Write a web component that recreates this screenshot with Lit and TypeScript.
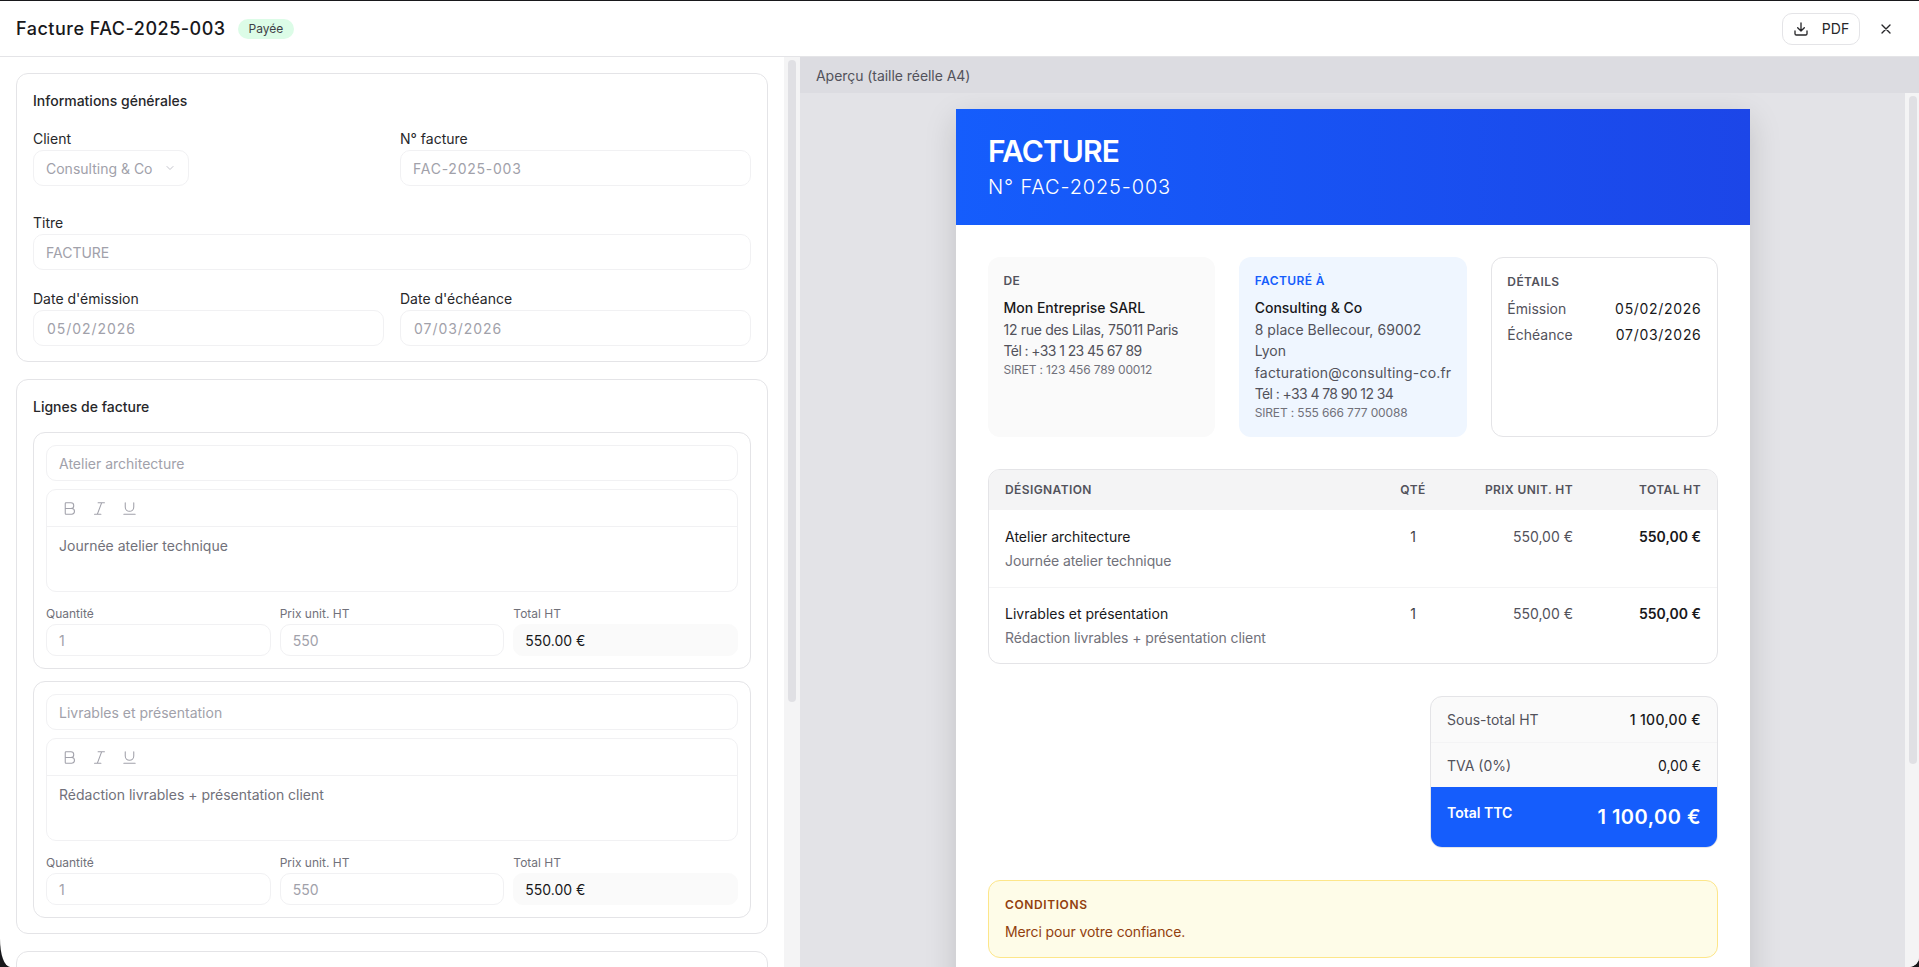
import { LitElement, html, css, svg } from 'lit';
import { customElement } from 'lit/decorators.js';

const LINES = [
  { title: 'Atelier architecture', desc: 'Journée atelier technique' },
  { title: 'Livrables et présentation', desc: 'Rédaction livrables + présentation client' },
];

const bold = svg`<path d="M6 12h9a4 4 0 0 1 0 8H7a1 1 0 0 1-1-1V5a1 1 0 0 1 1-1h7a4 4 0 0 1 0 8"/>`;
const italic = svg`<path d="M19 4h-9M14 20H5M15 4 9 20"/>`;
const underline = svg`<path d="M6 4v6a6 6 0 0 0 12 0V4M4 20h16"/>`;

@customElement('app-root')
export class AppRoot extends LitElement {
  static styles = css`
    :host {
      display: block;
      height: 967px;
      overflow: hidden;
      background: #18181b;
      font-family: Inter, 'Noto Sans', sans-serif;
      color: #18181b;
    }
    .modal {
      height: 966px;
      margin-top: 1px;
      background: #fff;
      border-radius: 0 0 10px 10px / 0 0 10px 28px;
      overflow: hidden;
      display: flex;
      flex-direction: column;
    }
    .top {
      height: 56px;
      box-sizing: border-box;
      flex: none;
      border-bottom: 1px solid #e4e4e7;
      display: flex;
      align-items: center;
      padding: 0 16px;
      gap: 12px;
    }
    .top h1 {
      margin: 0;
      font-size: 18px;
      font-weight: 500;
      line-height: 28px;
      letter-spacing: 0.5px;
    }
    .badge {
      background: #dcfce7;
      color: #3f3f46;
      font-size: 12px;
      height: 20px;
      line-height: 20px;
      padding: 0 11px;
      border-radius: 10px;
    }
    .spacer { flex: 1; }
    .pdf {
      width: 78px;
      height: 32px;
      box-sizing: border-box;
      border: 1px solid #e4e4e7;
      border-radius: 10px;
      display: flex;
      align-items: center;
      justify-content: center;
      gap: 13px;
      font-size: 14px;
      color: #27272a;
    }
    .close { margin: 0 9px 0 6px; display: flex; }
    .split { flex: 1; min-height: 0; display: flex; }
    .left {
      width: 800px;
      flex: none;
      position: relative;
      overflow: hidden;
      padding: 16px 32px 0 16px;
      box-sizing: border-box;
      display: flex;
      flex-direction: column;
      gap: 17px;
    }
    .track {
      position: absolute;
      top: 0;
      right: 0;
      bottom: 0;
      background: #f4f4f5;
    }
    .left .track { width: 16px; }
    .pv-body .track { width: 14px; }
    .thumb {
      position: absolute;
      left: 4px;
      top: 3px;
      width: 8px;
      border-radius: 4px;
      background: #e0e0e4;
    }
    .left .thumb { height: 642px; }
    .pv-body .thumb { height: 668px; }
    .card {
      flex: none;
      border: 1px solid #e4e4e7;
      border-radius: 12px;
      padding: 15px 16px;
    }
    .card.empty { height: 120px; }
    .card h2 {
      margin: 0;
      font-size: 14px;
      font-weight: 500;
      line-height: 24px;
      color: #27272a;
    }
    .fields {
      display: grid;
      grid-template-columns: 1fr 1fr;
      column-gap: 16px;
      margin-top: 16px;
    }
    .field { display: flex; flex-direction: column; align-items: flex-start; margin-bottom: 27px; }
    .field.wide { grid-column: 1 / 3; margin-bottom: 19px; }
    .field.last { margin-bottom: 0; }
    label {
      font-size: 14px;
      line-height: 20px;
      margin-bottom: 1px;
      color: #27272a;
    }
    .input {
      box-sizing: border-box;
      width: 100%;
      height: 36px;
      border: 1px solid #f1f1f3;
      border-radius: 10px;
      padding: 0 12px;
      display: flex;
      align-items: center;
      font-size: 14px;
      color: #a1a1aa;
    }
    .input.code { letter-spacing: 0.75px; }
    .input.date { padding: 0 13px; letter-spacing: 0.95px; }
    .select {
      width: 156px;
      justify-content: space-between;
    }
    .lines { display: flex; flex-direction: column; gap: 12px; margin-top: 13px; }
    .line {
      border: 1px solid #e4e4e7;
      border-radius: 12px;
      padding: 12px;
      display: flex;
      flex-direction: column;
      gap: 8px;
    }
    .editor {
      border: 1px solid #f1f1f3;
      border-radius: 10px;
      height: 103px;
      box-sizing: border-box;
    }
    .toolbar {
      height: 37px;
      box-sizing: border-box;
      border-bottom: 1px solid #f1f1f3;
      display: flex;
      align-items: center;
      gap: 13px;
      padding: 0 14px;
      color: #a1a1aa;
    }
    .toolbar svg { display: block; }
    .body {
      padding: 9px 12px;
      font-size: 14px;
      line-height: 20px;
      color: #71717a;
    }
    .nums {
      display: grid;
      grid-template-columns: 1fr 1fr 1fr;
      gap: 9px;
      margin-top: 6px;
    }
    .nums label {
      display: block;
      font-size: 12px;
      line-height: 16px;
      color: #71717a;
      margin-bottom: 2px;
    }
    .nums .input { height: 32px; }
    .input.total {
      background: #fafafa;
      border-color: #fafafa;
      color: #18181b;
      padding: 0 11px;
    }
    .right {
      flex: 1;
      min-width: 0;
      background: #e3e3e7;
      display: flex;
      flex-direction: column;
    }
    .pv-head {
      height: 36px;
      flex: none;
      background: #dcdce1;
      padding: 0 16px;
      display: flex;
      align-items: center;
      font-size: 14px;
      letter-spacing: -0.05px;
      color: #52525b;
    }
    .pv-body {
      flex: 1;
      min-height: 0;
      position: relative;
      overflow: hidden;
      padding: 16px 155px 0 156px;
    }
    .page {
      width: 794px;
      background: #fff;
      box-shadow: 0 10px 30px rgba(0, 0, 0, 0.15);
    }
    .banner {
      height: 116px;
      box-sizing: border-box;
      padding: 24px 32px;
      color: #fff;
      background: linear-gradient(90deg, #155dfc, #1c46e8);
    }
    .banner h3 {
      margin: 0;
      font-size: 30px;
      line-height: 36px;
      font-weight: 600;
      letter-spacing: -0.9px;
    }
    .banner p {
      margin: 4px 0 0;
      font-size: 20px;
      line-height: 28px;
      font-weight: 300;
      letter-spacing: 0.85px;
    }
    .content { padding: 32px; display: flex; flex-direction: column; }
    .parties {
      display: grid;
      grid-template-columns: repeat(3, 1fr);
      gap: 24px;
      height: 180px;
    }
    .party {
      border-radius: 12px;
      padding: 16px 15.5px;
      font-size: 14px;
      line-height: 21.5px;
      color: #52525b;
      box-sizing: border-box;
    }
    .party.from { background: #fafafa; }
    .party.to { background: #eff6ff; }
    .party.details { border: 1px solid #e4e4e7; }
    .party h4 {
      margin: 0 0 8px;
      font-size: 12px;
      line-height: 16px;
      font-weight: 600;
      letter-spacing: 0.4px;
      color: #52525b;
    }
    .party.details h4 { margin-bottom: 6px; }
    .party.to h4 { color: #155dfc; }
    .party strong { display: block; font-weight: 500; color: #18181b; }
    .party small { display: block; font-size: 12px; line-height: 16px; color: #71717a; letter-spacing: -0.15px; }
    .addr { display: block; letter-spacing: -0.3px; }
    .mail { display: block; letter-spacing: 0.2px; white-space: nowrap; }
    .tel { display: block; letter-spacing: -0.6px; }
    .city { display: block; letter-spacing: 0.05px; }
    .kv { display: flex; justify-content: space-between; line-height: 26px; }
    .kv b { font-weight: 400; color: #18181b; letter-spacing: 0.7px; }
    table {
      margin-top: 32px;
      width: 100%;
      border-collapse: separate;
      border-spacing: 0;
      border: 1px solid #e4e4e7;
      border-radius: 12px;
      overflow: hidden;
      font-size: 14px;
    }
    th {
      height: 40px;
      box-sizing: border-box;
      background: #f4f4f5;
      font-size: 12px;
      font-weight: 600;
      letter-spacing: 0.4px;
      color: #52525b;
      text-align: right;
      padding: 0 16px 1px;
    }
    th:first-child, td:first-child { text-align: left; }
    th:nth-child(2), td:nth-child(2) { text-align: center; width: 40px; }
    th:nth-child(3), td:nth-child(3) { width: 108px; }
    th:nth-child(4), td:nth-child(4) { width: 96px; }
    td {
      vertical-align: top;
      text-align: right;
      padding: 16px;
      line-height: 21px;
      color: #52525b;
    }
    tr + tr td { border-top: 1px solid #f4f4f5; padding: 15px 16px; }
    td .t { color: #18181b; }
    td .d { color: #71717a; line-height: 20px; margin-top: 4px; letter-spacing: -0.1px; }
    td.q { color: #3f3f46; }
    td.s { color: #18181b; font-weight: 600; }
    .totals {
      margin: 32px 0 0 auto;
      width: 288px;
      box-sizing: border-box;
      border: 1px solid #e4e4e7;
      border-radius: 12px;
      overflow: hidden;
      font-size: 14px;
      background: #fafafa;
    }
    .tr {
      height: 45px;
      box-sizing: border-box;
      display: flex;
      align-items: center;
      justify-content: space-between;
      padding: 0 16px;
      color: #52525b;
    }
    .tr + .tr { border-top: 1px solid #f4f4f5; }
    .tr b { font-weight: 500; color: #18181b; letter-spacing: 0.3px; }
    .tr b.plain { font-weight: 400; letter-spacing: 0; }
    .grand {
      height: 60px;
      background: #155dfc;
      color: #fff;
      display: flex;
      justify-content: space-between;
      padding: 16px;
      box-sizing: border-box;
      font-weight: 600;
    }
    .grand span { line-height: 20px; }
    .grand b { font-size: 20px; line-height: 28px; font-weight: 600; letter-spacing: 0.5px; }
    .notes {
      margin-top: 32px;
      height: 78px;
      box-sizing: border-box;
      background: #fefce8;
      border: 1px solid #fde68a;
      border-radius: 12px;
      padding: 16px;
      font-size: 14px;
      color: #92400e;
    }
    .notes h4 {
      margin: 0 0 8px;
      font-size: 12px;
      line-height: 16px;
      font-weight: 600;
      letter-spacing: 0.6px;
    }
    .notes p { margin: 0; line-height: 22px; letter-spacing: -0.1px; }
  `;

  tool(d: unknown) {
    return html`<svg width="17" height="17" viewBox="0 0 24 24" fill="none" stroke="currentColor" stroke-width="1.5" stroke-linecap="round" stroke-linejoin="round">${d}</svg>`;
  }

  renderLine(l: { title: string; desc: string }) {
    return html`
      <div class="line">
        <div class="input">${l.title}</div>
        <div class="editor">
          <div class="toolbar">${this.tool(bold)}${this.tool(italic)}${this.tool(underline)}</div>
          <div class="body">${l.desc}</div>
        </div>
        <div class="nums">
          <div><label>Quantité</label><div class="input">1</div></div>
          <div><label>Prix unit. HT</label><div class="input">550</div></div>
          <div><label>Total HT</label><div class="input total">550.00 €</div></div>
        </div>
      </div>
    `;
  }

  render() {
    return html`
      <div class="modal">
        <div class="top">
          <h1>Facture FAC-2025-003</h1>
          <span class="badge">Payée</span>
          <span class="spacer"></span>
          <div class="pdf">
            <svg width="16" height="16" viewBox="0 0 24 24" fill="none" stroke="currentColor" stroke-width="2" stroke-linecap="round" stroke-linejoin="round"><path d="M12 15V3M21 15v4a2 2 0 0 1-2 2H5a2 2 0 0 1-2-2v-4M7 10l5 5 5-5"/></svg>
            PDF
          </div>
          <span class="close"><svg width="16" height="16" viewBox="0 0 24 24" fill="none" stroke="#27272a" stroke-width="2" stroke-linecap="round"><path d="M18 6 6 18M6 6l12 12"/></svg></span>
        </div>
        <div class="split">
          <div class="left">
            <div class="track"><div class="thumb"></div></div>
            <section class="card">
              <h2>Informations générales</h2>
              <div class="fields">
                <div class="field">
                  <label>Client</label>
                  <div class="input select">Consulting &amp; Co
                    <svg width="12" height="12" viewBox="0 0 24 24" fill="none" stroke="#c4c4cc" stroke-width="2" stroke-linecap="round" stroke-linejoin="round"><path d="m6 9 6 6 6-6"/></svg>
                  </div>
                </div>
                <div class="field"><label>N° facture</label><div class="input code">FAC-2025-003</div></div>
                <div class="field wide"><label>Titre</label><div class="input">FACTURE</div></div>
                <div class="field last"><label>Date d'émission</label><div class="input date">05/02/2026</div></div>
                <div class="field last"><label>Date d'échéance</label><div class="input date">07/03/2026</div></div>
              </div>
            </section>
            <section class="card">
              <h2>Lignes de facture</h2>
              <div class="lines">${LINES.map((l) => this.renderLine(l))}</div>
            </section>
            <section class="card empty"></section>
          </div>
          <div class="right">
            <div class="pv-head">Aperçu (taille réelle A4)</div>
            <div class="pv-body">
              <div class="track"><div class="thumb"></div></div>
              <div class="page">
                <div class="banner">
                  <h3>FACTURE</h3>
                  <p>N° FAC-2025-003</p>
                </div>
                <div class="content">
                  <div class="parties">
                    <div class="party from">
                      <h4>DE</h4>
                      <strong>Mon Entreprise SARL</strong>
                      <span class="addr">12 rue des Lilas, 75011 Paris</span>
                      <span class="tel">Tél : +33 1 23 45 67 89</span>
                      <small>SIRET : 123 456 789 00012</small>
                    </div>
                    <div class="party to">
                      <h4>FACTURÉ À</h4>
                      <strong>Consulting &amp; Co</strong>
                      <span class="city">8 place Bellecour, 69002 Lyon</span>
                      <span class="mail">facturation@consulting-co.fr</span>
                      <span class="tel">Tél : +33 4 78 90 12 34</span>
                      <small>SIRET : 555 666 777 00088</small>
                    </div>
                    <div class="party details">
                      <h4>DÉTAILS</h4>
                      <div class="kv"><span>Émission</span><b>05/02/2026</b></div>
                      <div class="kv"><span>Échéance</span><b>07/03/2026</b></div>
                    </div>
                  </div>
                  <table>
                    <thead><tr><th>DÉSIGNATION</th><th>QTÉ</th><th>PRIX UNIT. HT</th><th>TOTAL HT</th></tr></thead>
                    <tbody>
                      ${LINES.map((l) => html`
                        <tr>
                          <td><div class="t">${l.title}</div><div class="d">${l.desc}</div></td>
                          <td class="q">1</td>
                          <td>550,00 €</td>
                          <td class="s">550,00 €</td>
                        </tr>`)}
                    </tbody>
                  </table>
                  <div class="totals">
                    <div class="tr"><span>Sous-total HT</span><b>1 100,00 €</b></div>
                    <div class="tr"><span>TVA (0%)</span><b class="plain">0,00 €</b></div>
                    <div class="grand"><span>Total TTC</span><b>1 100,00 €</b></div>
                  </div>
                  <div class="notes">
                    <h4>CONDITIONS</h4>
                    <p>Merci pour votre confiance.</p>
                  </div>
                </div>
              </div>
            </div>
          </div>
        </div>
      </div>
    `;
  }
}
